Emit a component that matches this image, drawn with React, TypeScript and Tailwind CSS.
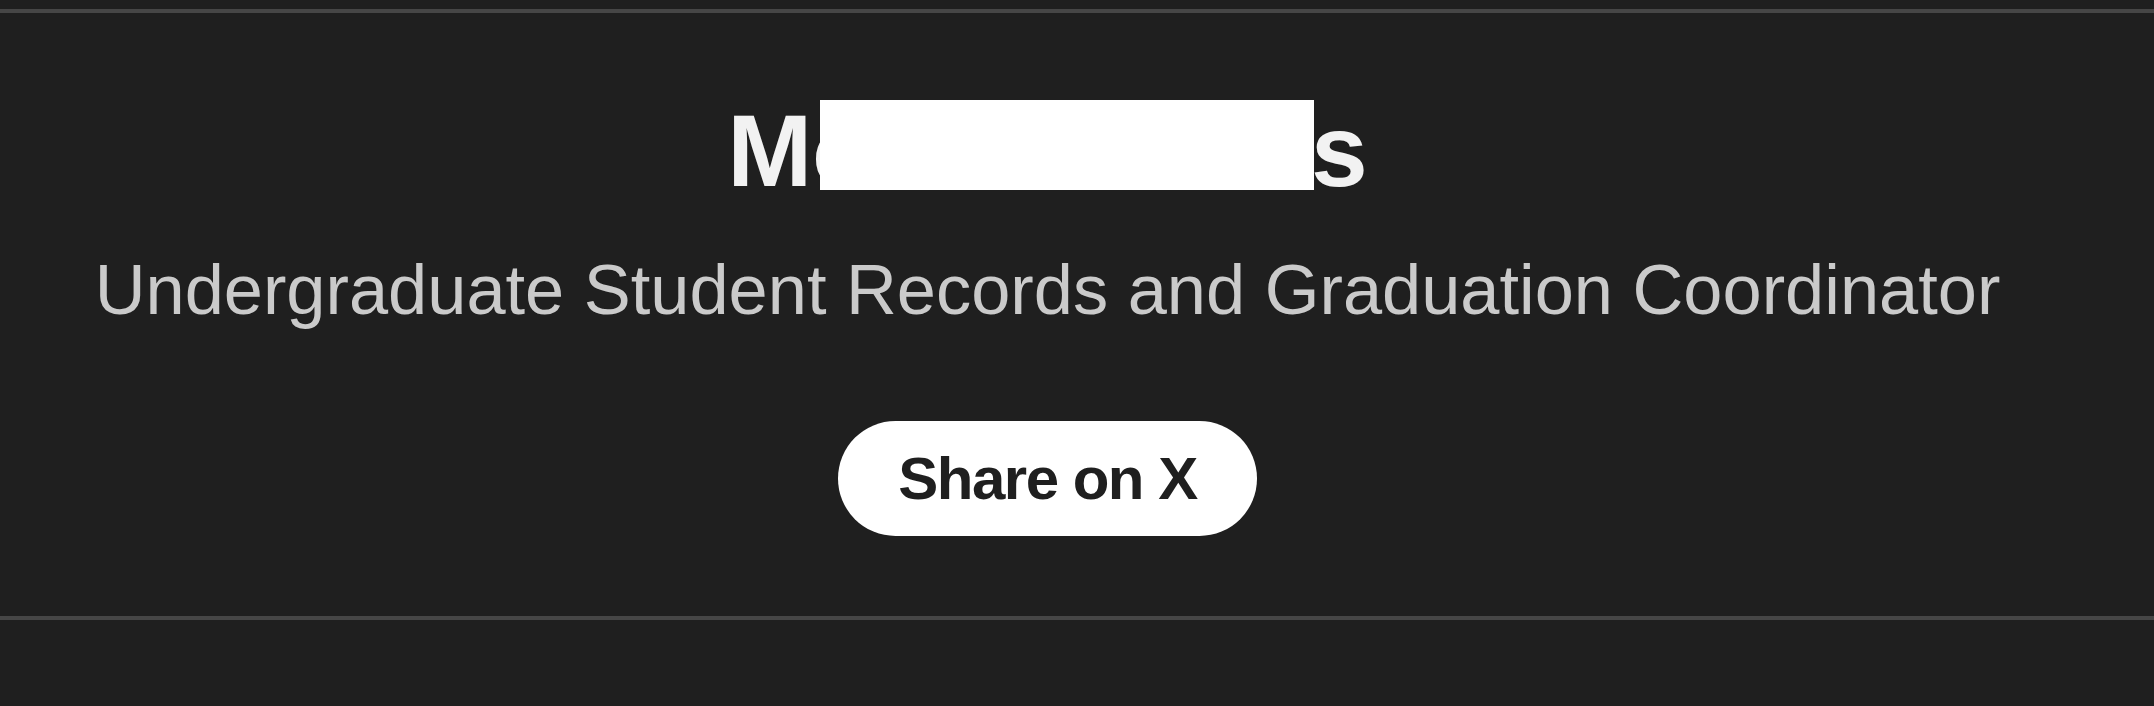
const font = { fontFamily: '"Liberation Sans", Arial, Helvetica, sans-serif' };

const ProfileHeader = () => {
  return (
    <section className="border-y-4 border-[#464646] pt-[87px] pb-[80px] pr-[59px]">
      <div className="flex flex-col items-center text-center">
        <h1 className="flex text-[102px] font-bold leading-none text-[#f2f2f2]">
          <span>M</span>
          <span className="relative inline-block w-[499px] text-left">
            <span>o</span>
            {/* redacted */}
            <span className="absolute left-[8px] top-0 h-[90px] w-[494px] bg-white" />
          </span>
          <span>s</span>
        </h1>
        <p className="mt-[53px] text-[70.4px] leading-none text-[#cacaca] whitespace-nowrap">
          Undergraduate Student Records and Graduation Coordinator
        </p>
        <button className="mt-[96px] flex h-[115px] items-center rounded-full bg-white px-[60px] text-[60px] font-bold leading-none tracking-[-1.5px] text-[#1f1f1f]">
          Share on X
        </button>
      </div>
    </section>
  );
};

export default function App() {
  return (
    <div className="min-h-screen bg-[#1f1f1f] pt-[9px]" style={font}>
      <ProfileHeader />
    </div>
  );
}
